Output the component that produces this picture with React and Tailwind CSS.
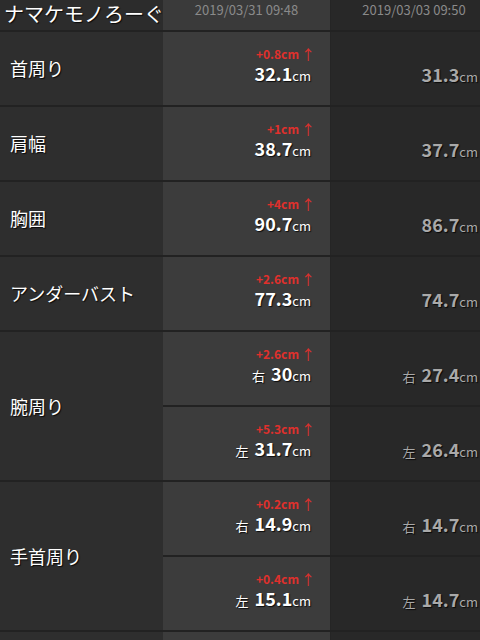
import React from 'react';

const records = [
  { label: '首周り', rows: [{ delta: '+0.8cm', now: '32.1', prev: '31.3' }] },
  { label: '肩幅', rows: [{ delta: '+1cm', now: '38.7', prev: '37.7' }] },
  { label: '胸囲', rows: [{ delta: '+4cm', now: '90.7', prev: '86.7' }] },
  { label: 'アンダーバスト', rows: [{ delta: '+2.6cm', now: '77.3', prev: '74.7' }] },
  {
    label: '腕周り',
    rows: [
      { side: '右', delta: '+2.6cm', now: '30', prev: '27.4' },
      { side: '左', delta: '+5.3cm', now: '31.7', prev: '26.4' },
    ],
  },
  {
    label: '手首周り',
    rows: [
      { side: '右', delta: '+0.2cm', now: '14.9', prev: '14.7' },
      { side: '左', delta: '+0.4cm', now: '15.1', prev: '14.7' },
    ],
  },
  { label: '', rows: [{ delta: '', now: '', prev: '' }] },
];

const shadow = '[text-shadow:1px_1px_1px_rgba(0,0,0,0.8)]';

const Value = ({ side, value, dim }) => (
  <div className={`flex items-baseline mr-[4px] ${dim ? 'text-[#a9a9a9]' : 'text-white'} ${shadow}`}>
    {side && <span className="text-[13px] leading-[20px] mr-[6px]">{side}</span>}
    <span className="text-[18px] font-bold leading-[22px]">{value}</span>
    {value && <span className="text-[13px] leading-[20px]">cm</span>}
  </div>
);

const SubRow = ({ row }) => (
  <div className="flex h-[75px] border-b-2 border-[#222222]">
    <div className="w-[167px] bg-[#3c3c3c] flex flex-col items-end justify-center pr-[15px] pb-[6px]">
      <div className="flex items-center text-[12px] font-semibold leading-[16px] text-[#e0302c] h-[16px]">
        {row.delta && (
          <>
            <span>{row.delta}</span>
            <span className="font-normal text-[14px] leading-[16px] ml-[2px]">↑</span>
          </>
        )}
      </div>
      <Value side={row.side} value={row.now} />
    </div>
    <div className="w-[167px] shrink-0 bg-[#282828] border-l border-[#252525] flex flex-col items-end justify-center pr-[15px] pb-[3px]">
      <div className="h-[16px]" />
      <Value side={row.side} value={row.prev} dim />
    </div>
  </div>
);

export default function App() {
  return (
    <div className="w-[480px] h-[640px] overflow-hidden bg-[#2e2e2e] font-['Noto_Sans_CJK_JP','Noto_Sans',sans-serif]">
      <div className="w-[497px]">
        {/* Header */}
        <div className="flex h-[32px] border-b-2 border-[#222222]">
          <div className="w-[163px] bg-[#2c2c2c] flex items-center pl-[4px] pb-[2px]">
            <span className={`text-[20px] leading-[26px] text-white whitespace-nowrap ${shadow}`}>
              ナマケモノろーぐ
            </span>
          </div>
          <div className="w-[167px] bg-[#3a3a3a] flex items-center justify-center text-[13px] text-[#8a8a8a] pb-[10px]">
            2019/03/31 09:48
          </div>
          <div className="w-[167px] bg-[#282828] border-l border-[#252525] flex items-center justify-center text-[13px] text-[#8a8a8a] pb-[10px]">
            2019/03/03 09:50
          </div>
        </div>

        {records.map((rec, i) => (
          <div key={i} className="flex">
            <div className="w-[163px] shrink-0 flex flex-col">
              <div className="flex-1 flex items-center pl-[10px] border-b-2 border-[#222222] bg-[#2e2e2e]">
                <span className={`text-[18px] text-white ${shadow}`}>{rec.label}</span>
              </div>
            </div>
            <div className="flex flex-col">
              {rec.rows.map((row, j) => (
                <SubRow key={j} row={row} />
              ))}
            </div>
          </div>
        ))}
      </div>
    </div>
  );
}
